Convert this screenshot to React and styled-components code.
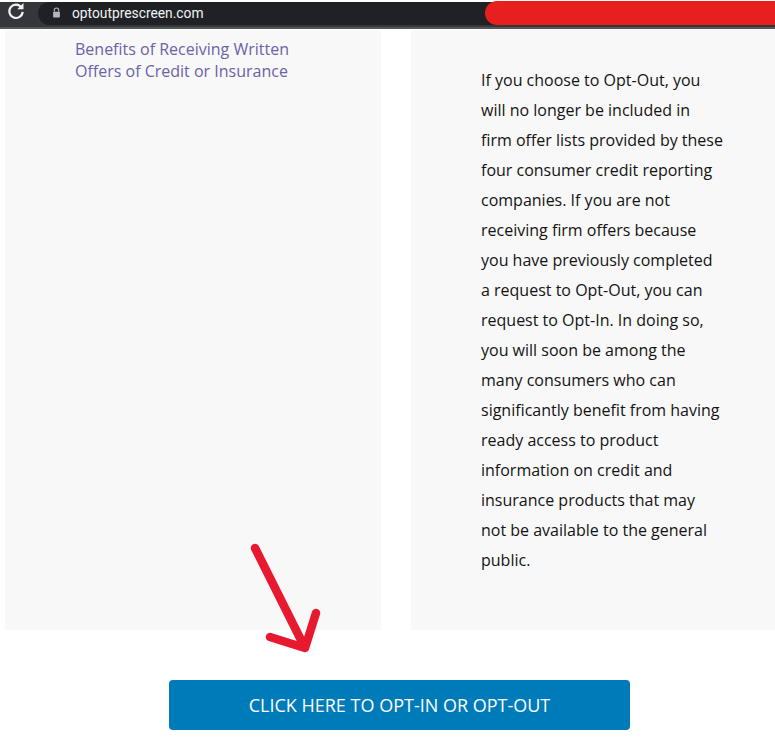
import React from 'react'
import styled, { createGlobalStyle } from 'styled-components'

const paragraph = `If you choose to Opt-Out, you
will no longer be included in
firm offer lists provided by these
four consumer credit reporting
companies. If you are not
receiving firm offers because
you have previously completed
a request to Opt-Out, you can
request to Opt-In. In doing so,
you will soon be among the
many consumers who can
significantly benefit from having
ready access to product
information on credit and
insurance products that may
not be available to the general
public.`.split('\n')

export default function App() {
  return (
    <Page>
      <GlobalStyle />
      <BrowserBar>
        <ReloadIcon viewBox="0 0 24 24" fill="none">
          <path
            d="M18.6 7.8A8 8 0 1 0 20 13"
            stroke="#f1f3f4"
            strokeWidth="2.6"
            fill="none"
          />
          <path d="M21 2.5V10h-7.5z" fill="#f1f3f4" />
        </ReloadIcon>
        <AddressPill>
          <LockIcon viewBox="0 0 12 14">
            <path
              d="M3 6V4a3 3 0 0 1 6 0v2"
              stroke="#b4b6b9"
              strokeWidth="1.4"
              fill="none"
            />
            <rect x="1.5" y="6" width="9" height="7.5" rx="1" fill="#b4b6b9" />
          </LockIcon>
          <Url>optoutprescreen.com</Url>
        </AddressPill>
        <Redaction />
      </BrowserBar>
      <Columns>
        <SidePanel>
          <SideLink href="#">
            Benefits of Receiving Written
            <br />
            Offers of Credit or Insurance
          </SideLink>
        </SidePanel>
        <MainPanel>
          {paragraph.map((line, index) => (
            <Line key={index}>{line}</Line>
          ))}
        </MainPanel>
      </Columns>
      <ButtonRow>
        <Arrow viewBox="0 0 76 114" fill="none">
          <path
            d="M7 6 L57 106 M22 95 L57 106 M68 71 L57 106"
            stroke="#e8192f"
            strokeWidth="8.5"
            strokeLinecap="round"
            strokeLinejoin="round"
          />
        </Arrow>
        <OptButton>CLICK HERE TO OPT-IN OR OPT-OUT</OptButton>
      </ButtonRow>
    </Page>
  )
}

const GlobalStyle = createGlobalStyle`
  html, body {
    margin: 0;
    padding: 0;
    background: #fff;
  }
  body {
    font-family: "Open Sans", "Liberation Sans", sans-serif;
  }
`

const Page = styled.div`
  width: 775px;
  height: 741px;
  overflow: hidden;
`

const BrowserBar = styled.header`
  box-sizing: border-box;
  height: 30px;
  padding: 2px 0 0 6px;
  display: flex;
  align-items: flex-start;
  background: linear-gradient(#fff 0 2px, #35363a 2px 27px, #55565a 27px 29px, #fff 29px);
  position: relative;
`

const ReloadIcon = styled.svg`
  width: 20px;
  height: 20px;
  margin-top: -1px;
  flex: none;
`

const AddressPill = styled.div`
  margin-left: 12px;
  flex: 1;
  height: 23px;
  border-radius: 12px 0 0 12px;
  background: #202124;
  display: flex;
  align-items: center;
  padding-left: 14px;
`

const LockIcon = styled.svg`
  width: 9px;
  height: 11px;
  margin-top: -2px;
`

const Url = styled.span`
  margin-left: 11px;
  margin-top: -2px;
  font-family: "Roboto", "Liberation Sans", sans-serif;
  font-size: 13.8px;
  color: #f1f3f4;
`

const Redaction = styled.div`
  position: absolute;
  left: 485px;
  right: 0;
  top: 1px;
  height: 24px;
  background: #e71f1f;
  border-radius: 12px 0 0 12px;
`

const Columns = styled.div`
  height: 600px;
  padding-left: 5px;
  display: flex;
  gap: 30px;
`

const SidePanel = styled.aside`
  box-sizing: border-box;
  width: 376px;
  padding: 8px 0 0 70px;
  background: #f8f8f8;
`

const SideLink = styled.a`
  display: block;
  font-size: 16px;
  line-height: 22px;
  color: #6a63a8;
  text-decoration: none;
`

const MainPanel = styled.main`
  box-sizing: border-box;
  flex: 1;
  padding: 35px 0 0 70px;
  background: #f8f8f8;
`

const Line = styled.div`
  font-size: 16px;
  line-height: 30px;
  color: #141414;
  white-space: nowrap;
`

const ButtonRow = styled.div`
  position: relative;
  padding: 50px 0 0 169px;
`

const Arrow = styled.svg`
  position: absolute;
  left: 248px;
  top: -88px;
  width: 76px;
  height: 114px;
`

const OptButton = styled.button`
  display: block;
  width: 461px;
  height: 50px;
  border: 0;
  border-radius: 4px;
  background: #007bba;
  color: #fff;
  font-family: inherit;
  font-size: 18px;
`
